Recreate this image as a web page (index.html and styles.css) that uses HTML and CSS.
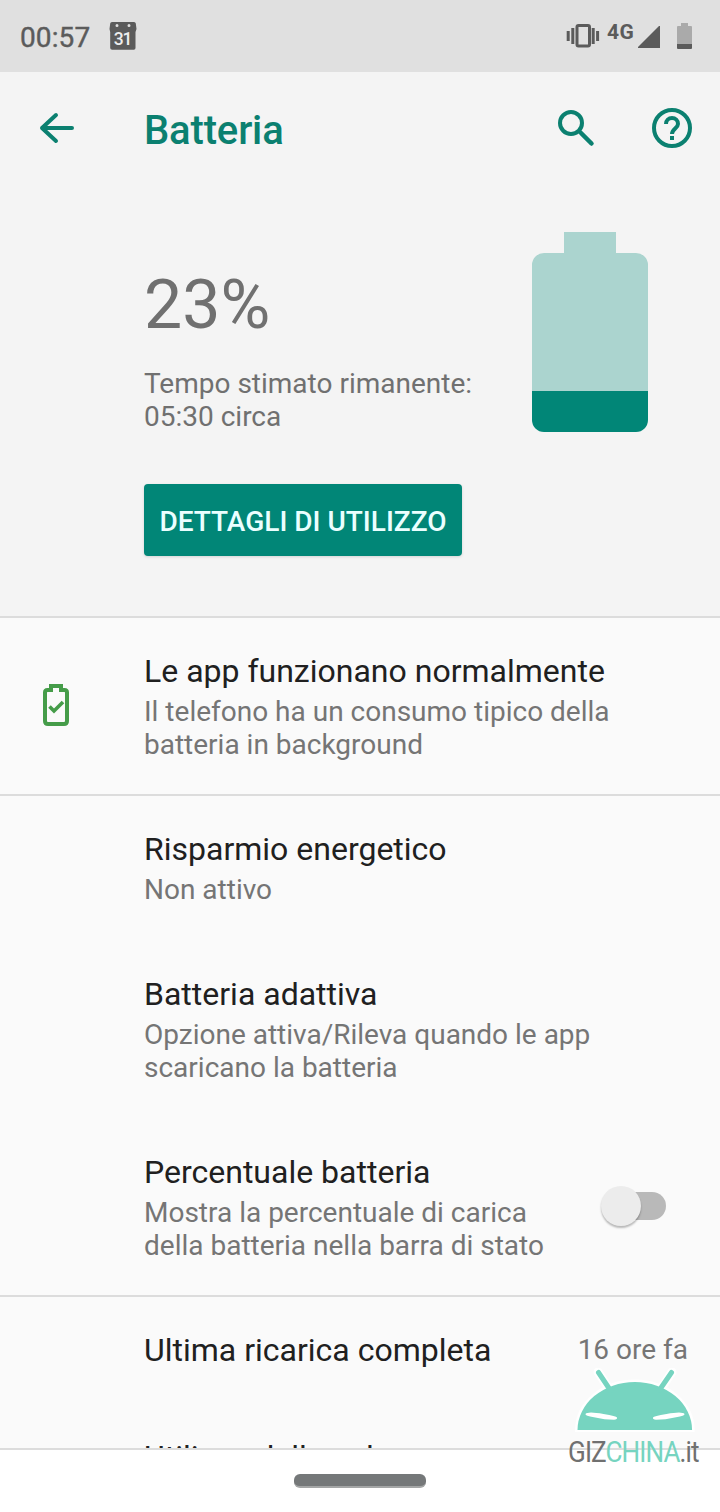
FILE: index.html
```html
<!DOCTYPE html>
<html lang="it">
<head>
<meta charset="utf-8">
<title>Batteria</title>
<link rel="stylesheet" href="styles.css">
</head>
<body>
<div class="phone">
  <header class="status">
    <span class="clock">00:57</span>
    <svg class="calendar" width="28" height="28" viewBox="0 0 28 28">
      <path fill="#5b5b5b" fill-rule="evenodd" d="M3 0h22q1.600 0 1.800 1.500L27.500 7 26.500 10V26q0 1.700-1.700 1.700H3.200Q1.200 27.700 1.200 26V10L.5 7 1.200 1.500Q1.400 0 3 0ZM8 2a1.500 1.500 0 1 0 0 3 1.500 1.500 0 0 0 0-3Zm12 0a1.500 1.500 0 1 0 0 3 1.500 1.500 0 0 0 0-3Z"/>
      <text x="13.500" y="22.500" text-anchor="middle" class="calendar-day">31</text>
    </svg>
    <div class="indicators">
      <svg class="vibrate" width="34" height="26" viewBox="0 0 34 26">
        <g fill="none" stroke="#5b5b5b" stroke-width="3">
          <rect x="11" y="2.500" width="12.500" height="20.500" rx="1.500"/>
          <path d="M2.200 8v10M6.800 5v16M27.200 5v16M31.600 8v10"/>
        </g>
      </svg>
      <span class="network">4G</span>
      <svg class="signal" width="22" height="22" viewBox="0 0 22 22"><path fill="#5b5b5b" d="M0 22V21L21 0h1v22z"/></svg>
      <svg class="mini-battery" width="15" height="26" viewBox="0 0 15 26"><path fill="#aaa" d="M4 0h7v3h3q1 0 1 1v18H0V4q0-1 1-1h3z"/><path fill="#5b5b5b" d="M0 21h15v4q0 1-1 1H1q-1 0-1-1z"/></svg>
    </div>
  </header>

  <nav class="toolbar">
    <svg class="back" width="36" height="32" viewBox="0 0 36 32"><path fill="none" stroke="#0b8070" stroke-width="4" stroke-linecap="round" stroke-linejoin="round" d="M33 16H3M17 3 3 16l14 13"/></svg>
    <h1 class="heading">Batteria</h1>
    <svg class="search" width="38" height="38" viewBox="0 0 38 38"><g fill="none" stroke="#0b8070" stroke-width="4"><circle cx="14" cy="14" r="11"/><path stroke-width="4.500" stroke-linecap="round" d="m24 24 10.500 10.500"/></g></svg>
    <svg class="help" width="40" height="40" viewBox="0 0 40 40"><g fill="none" stroke="#0b8070" stroke-width="4"><circle cx="20" cy="20" r="18"/><path d="M14 16a6 6 0 0 1 12 0c0 4.200-6 5-6 10"/></g><path fill="#0b8070" d="M18 28h4v4h-4z"/></svg>
  </nav>

  <section class="hero">
    <div class="charge">
      <div class="level">23%</div>
      <p class="remaining">Tempo stimato rimanente:<br>05:30 circa</p>
      <button class="details">DETTAGLI DI UTILIZZO</button>
    </div>
    <svg class="battery" width="116" height="200" viewBox="0 0 116 200"><path fill="#abd4cf" d="M32 0h52v21h20a12 12 0 0 1 12 12v127H0V33a12 12 0 0 1 12-12h20z"/><path fill="#018677" d="M0 159h116v29a12 12 0 0 1-12 12H12a12 12 0 0 1-12-12z"/></svg>
  </section>

  <main class="settings">
    <section class="row divided">
      <div class="icon-cell"><svg width="26" height="42" viewBox="0 0 26 42"><path fill="none" stroke="#459c49" stroke-width="4" stroke-linejoin="round" d="M8 6H4.500Q2 6 2 8.500V37q0 3 3 3h16q3 0 3-3V8.500Q24 6 21.500 6H18"/><path fill="#459c49" d="M6 0h14v8h-4V4h-6v4H6z"/><path fill="none" stroke="#459c49" stroke-width="3.600" d="m6.500 22.500 4.500 4.500 9-9"/></svg></div>
      <div class="copy"><h2 class="title">Le app funzionano normalmente</h2><p class="summary">Il telefono ha un consumo tipico della<br>batteria in background</p></div>
    </section>
    <section class="row single"><div class="copy"><h2 class="title">Risparmio energetico</h2><p class="summary">Non attivo</p></div></section>
    <section class="row double"><div class="copy"><h2 class="title">Batteria adattiva</h2><p class="summary">Opzione attiva/Rileva quando le app<br>scaricano la batteria</p></div></section>
    <section class="row divided"><div class="copy"><h2 class="title">Percentuale batteria</h2><p class="summary">Mostra la percentuale di carica<br>della batteria nella barra di stato</p></div><div class="switch"><span class="thumb"></span></div></section>
    <section class="row brief"><div class="copy"><h2 class="title">Ultima ricarica completa</h2></div><span class="value">16 ore fa</span></section>
    <section class="row brief"><div class="copy"><h2 class="title">Utilizzo dello schermo</h2></div></section>
  </main>
  <footer class="gesture"><span class="pill"></span></footer>
  <div class="watermark">
    <svg width="120" height="64" viewBox="0 0 120 64"><g fill="none" stroke="#fff" stroke-width="9" stroke-linecap="round"><path d="m23 4 12 18M97 4 85 22"/></g><path d="M2.500 62a57.300 48 0 0 1 114.600 0z" fill="#76d4c0" stroke="#fff" stroke-width="5" paint-order="stroke"/><path d="m23.500 4.500 12 18M96.500 4.500 84.500 22" fill="none" stroke="#76d4c0" stroke-width="5" stroke-linecap="round"/><path fill="#fff" d="M10.500 46q2-3 18 0 13 2 13.500 3.500.5 2-3 2.300-9 0-20-2.500-9-1.300-8.500-3.300ZM109.500 46q-2-3-18 0-13 2-13.500 3.500-.5 2 3 2.300 9 0 20-2.500 9-1.300 8.500-3.300Z"/></svg>
    <div class="brand">GIZ<span class="brand-accent">CHINA</span>.it</div>
  </div>
</div>
</body>
</html>
```
FILE: styles.css
```css
* { box-sizing: border-box; }
body { margin: 0; font-family: Roboto, "Liberation Sans", sans-serif; }
h1, h2, p { margin: 0; font-weight: 400; }
svg { display: block; flex: none; }
.phone { position: relative; display: flex; flex-direction: column; width: 720px; height: 1512px; overflow: hidden; background: #fff; }

.status { display: flex; height: 72px; padding: 22px 28px 0 20px; background: #e0e0e0; color: #5b5b5b; }
.clock { width: 89px; font-size: 28px; line-height: 32px; letter-spacing: .1px; -webkit-text-stroke: .4px #5b5b5b; }
.calendar-day { font: 500 17.500px Roboto, sans-serif; letter-spacing: -1.200px; fill: #eee; }
.indicators { display: flex; margin-left: auto; }
.vibrate { margin-top: 1px; }
.network { width: 31px; margin-left: 7px; font-size: 21px; font-weight: 700; line-height: 20px; letter-spacing: .5px; }
.signal { margin-top: 4px; }
.mini-battery { margin: 1px 0 0 17px; }

.toolbar { display: flex; align-items: center; height: 112px; padding: 0 28px 0 39px; background: #f4f4f4; color: #0b8070; }
.heading { margin: 5px auto 0 69px; font-size: 40px; font-weight: 500; line-height: 48px; letter-spacing: -.15px; }
.search { margin-right: 57px; }

.hero { display: flex; justify-content: space-between; height: 434px; padding: 48px 72px 0 144px; background: #f4f4f4; border-bottom: 2px solid #dcdcdc; }
.charge { padding-top: 33px; color: #707070; }
.level { height: 80px; font-size: 68px; line-height: 80px; }
.remaining { margin-top: 22px; font-size: 28px; line-height: 33px; white-space: nowrap; }
.details { width: 318px; height: 72px; margin-top: 51px; padding: 2px 0 0; border: 0; border-radius: 4px; background: #018677; color: #eaffff; font: 500 28px Roboto, sans-serif; white-space: nowrap; box-shadow: 0 1px 3px #0002; }

.settings { height: 830px; overflow: hidden; background: #fafafa; }
.row { display: flex; padding: 34px 32px 0 144px; }
.divided { height: 178px; border-bottom: 2px solid #dcdcdc; }
.single { height: 145px; }
.double { height: 178px; }
.brief { height: 107px; }
.icon-cell { width: 101px; margin: 32px 0 0 -101px; }
.title { font-size: 32px; line-height: 38px; color: #202020; white-space: nowrap; }
.summary { margin-top: 5px; font-size: 28px; line-height: 33px; color: #757575; white-space: nowrap; }
.switch { position: relative; width: 60px; height: 28px; margin: 39px 22px 0 auto; border-radius: 14px; background: #b9b9b9; }
.thumb { position: absolute; left: -5px; top: -6px; width: 40px; height: 40px; border-radius: 50%; background: #ececec; box-shadow: 0 2px 2px #0004; }
.value { margin-left: auto; font-size: 28px; line-height: 38px; color: #757575; }

.gesture { display: flex; flex: 1; justify-content: center; border-top: 2px solid #dcdcdc; background: #fff; }
.pill { width: 132px; height: 14px; margin-top: 24px; border-radius: 6px; background: #757879; border-bottom: 2px solid #a4a6a6; }

.watermark { position: absolute; left: 568px; top: 1368px; width: 140px; }
.watermark svg { margin-left: 7px; }
.brand { margin-top: 4px; font-size: 29px; line-height: 32px; letter-spacing: -1px; color: #707070; white-space: nowrap; transform: scaleX(.9); transform-origin: 0 0; }
.brand-accent { color: #76d4c0; }
```
